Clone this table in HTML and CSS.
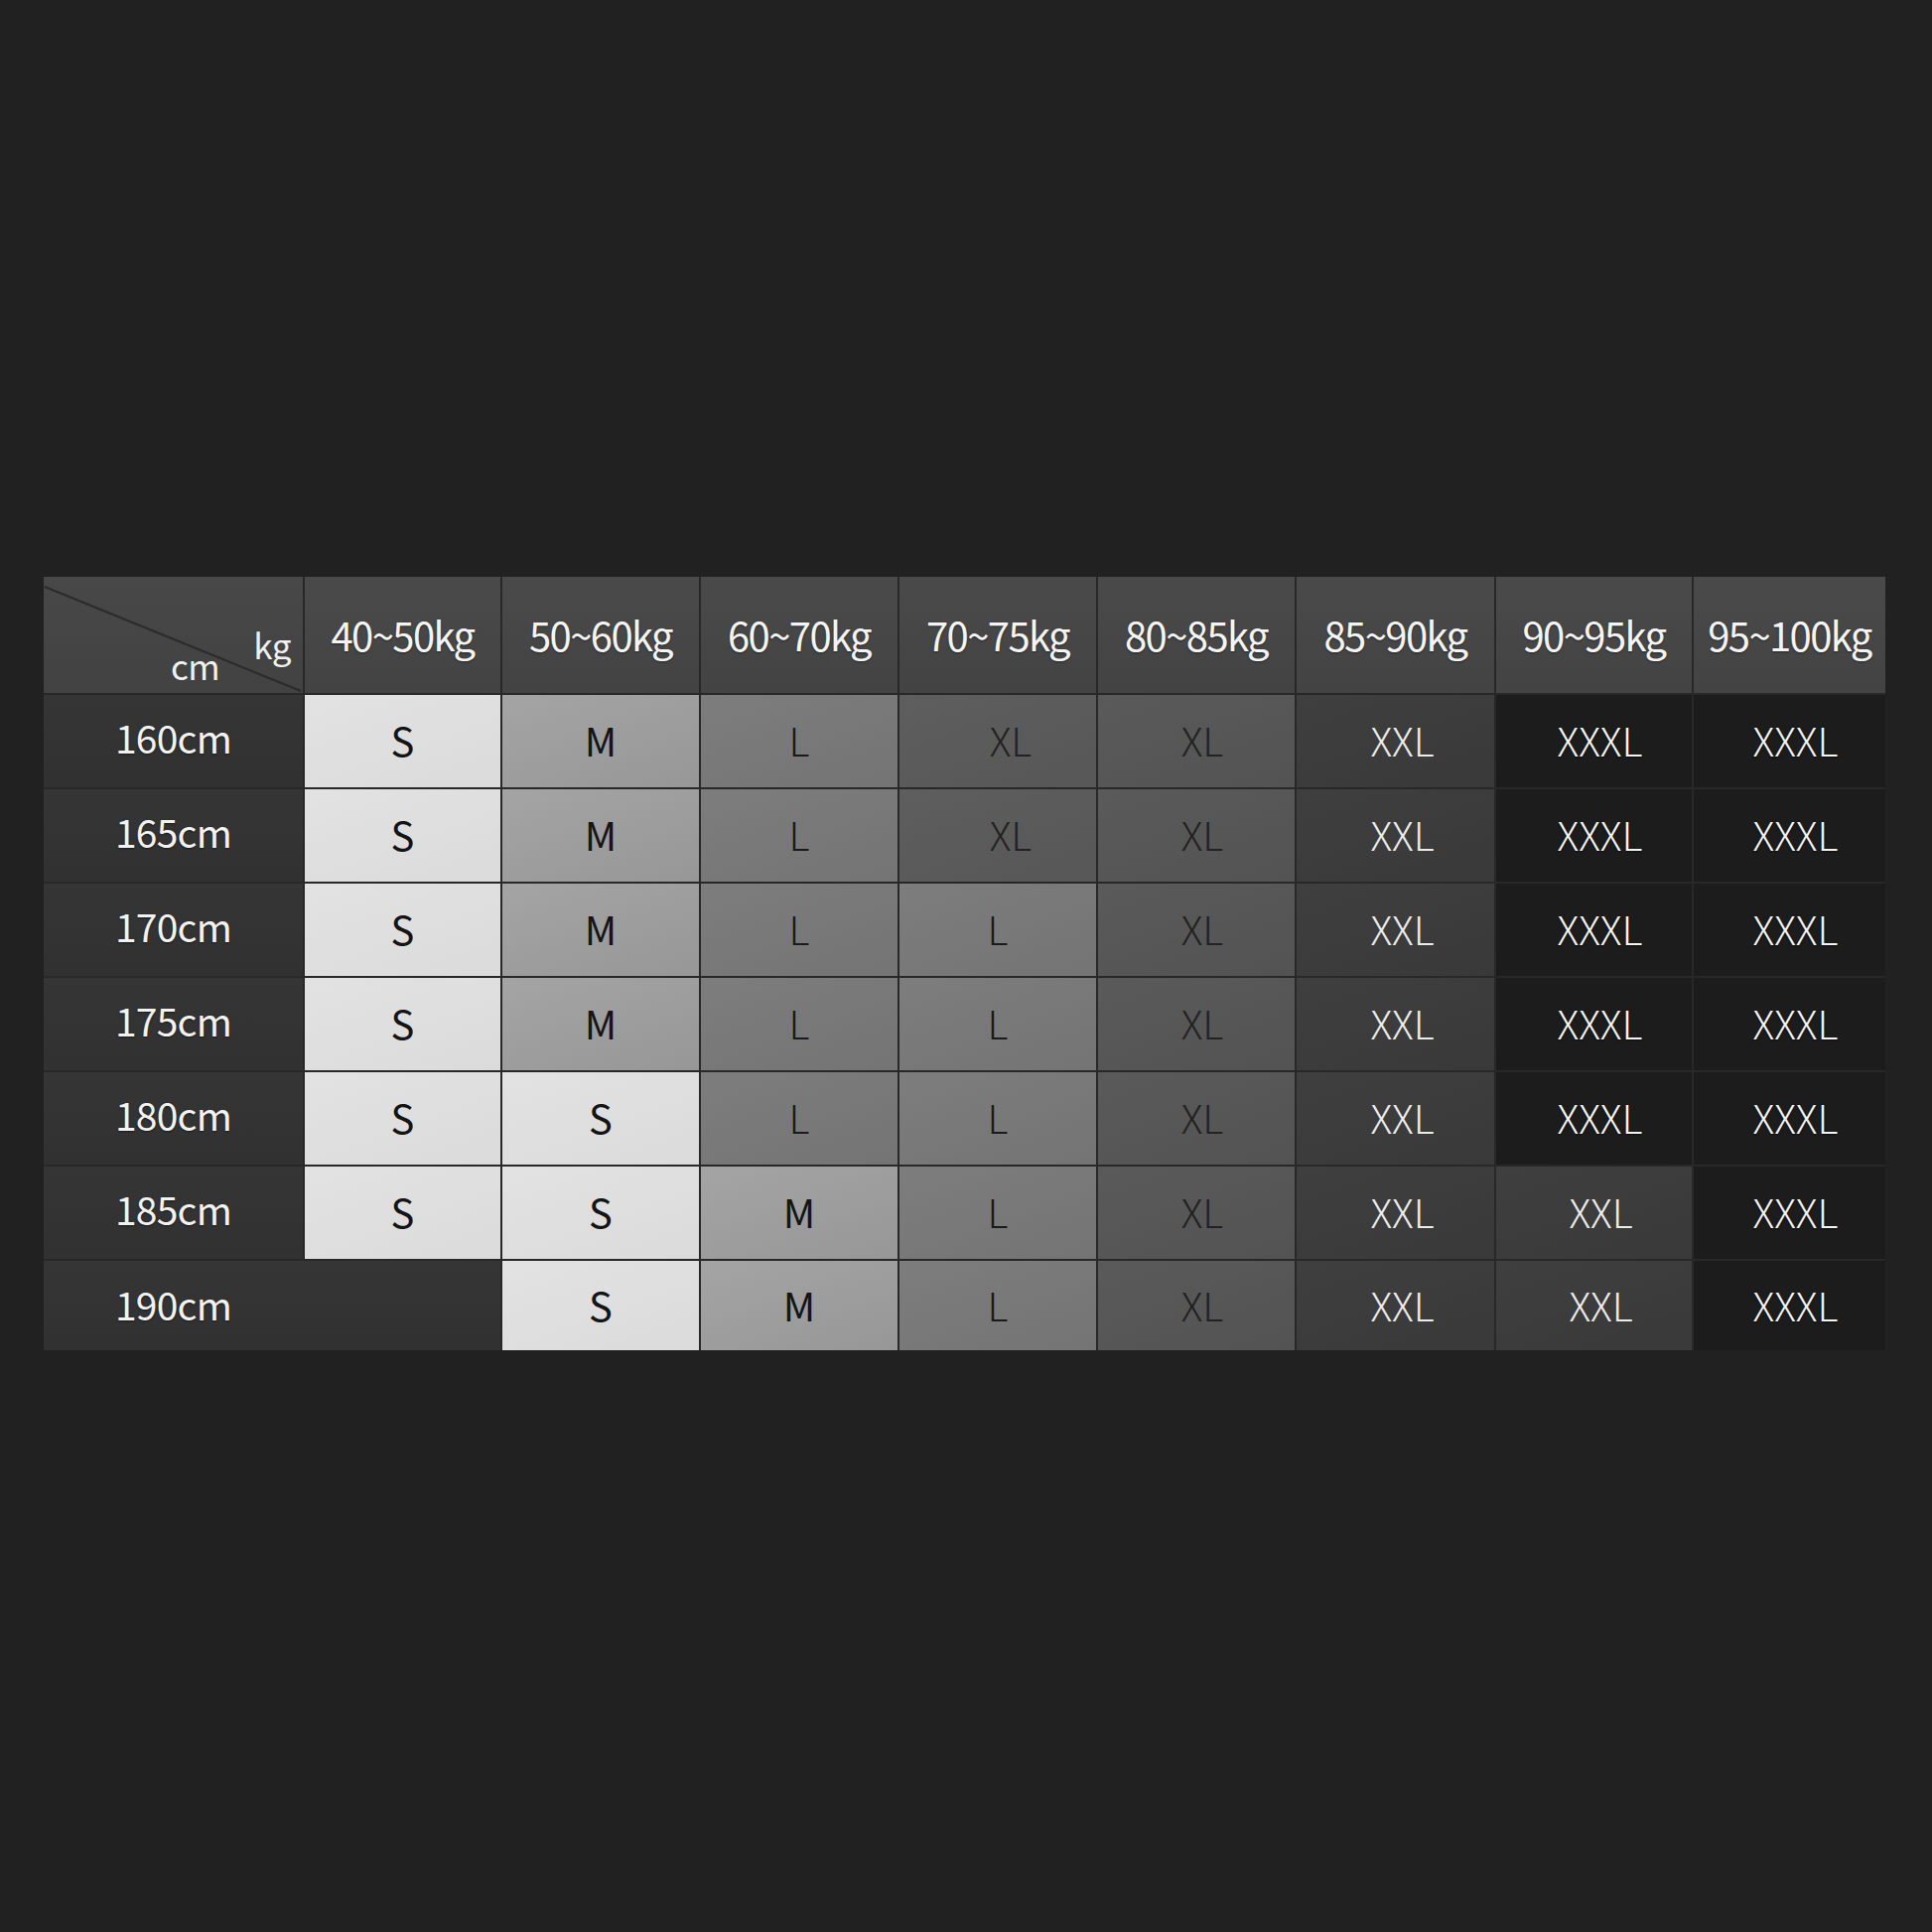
FILE: index.html
```html
<!DOCTYPE html>
<html lang="en">
<head>
<meta charset="utf-8">
<title>Size chart</title>
<link rel="stylesheet" href="styles.css">
</head>
<body>
<div class="chart">
  <div class="corner">
    <svg class="diag" viewBox="0 0 261 117" preserveAspectRatio="none"><line x1="1" y1="10" x2="259" y2="115"/></svg>
    <span class="unit-kg">kg</span>
    <span class="unit-cm">cm</span>
  </div>
  <div class="head">40~50kg</div>
  <div class="head">50~60kg</div>
  <div class="head">60~70kg</div>
  <div class="head">70~75kg</div>
  <div class="head">80~85kg</div>
  <div class="head">85~90kg</div>
  <div class="head">90~95kg</div>
  <div class="head">95~100kg</div>

  <div class="label">160cm</div>
  <div class="cell s">S</div><div class="cell m">M</div><div class="cell l">L</div><div class="cell xl xl-a">XL</div><div class="cell xl">XL</div><div class="cell xxl">XXL</div><div class="cell xxxl">XXXL</div><div class="cell xxxl">XXXL</div>

  <div class="label">165cm</div>
  <div class="cell s">S</div><div class="cell m">M</div><div class="cell l">L</div><div class="cell xl xl-a">XL</div><div class="cell xl">XL</div><div class="cell xxl">XXL</div><div class="cell xxxl">XXXL</div><div class="cell xxxl">XXXL</div>

  <div class="label">170cm</div>
  <div class="cell s">S</div><div class="cell m">M</div><div class="cell l">L</div><div class="cell l">L</div><div class="cell xl">XL</div><div class="cell xxl">XXL</div><div class="cell xxxl">XXXL</div><div class="cell xxxl">XXXL</div>

  <div class="label">175cm</div>
  <div class="cell s">S</div><div class="cell m">M</div><div class="cell l">L</div><div class="cell l">L</div><div class="cell xl">XL</div><div class="cell xxl">XXL</div><div class="cell xxxl">XXXL</div><div class="cell xxxl">XXXL</div>

  <div class="label">180cm</div>
  <div class="cell s">S</div><div class="cell s">S</div><div class="cell l">L</div><div class="cell l">L</div><div class="cell xl">XL</div><div class="cell xxl">XXL</div><div class="cell xxxl">XXXL</div><div class="cell xxxl">XXXL</div>

  <div class="label">185cm</div>
  <div class="cell s">S</div><div class="cell s">S</div><div class="cell m">M</div><div class="cell l">L</div><div class="cell xl">XL</div><div class="cell xxl">XXL</div><div class="cell xxl">XXL</div><div class="cell xxxl">XXXL</div>

  <div class="label label-wide"><span class="label-text">190cm</span></div>
  <div class="cell s">S</div><div class="cell m">M</div><div class="cell l">L</div><div class="cell xl">XL</div><div class="cell xxl">XXL</div><div class="cell xxl">XXL</div><div class="cell xxxl">XXXL</div>
</div>
</body>
</html>
```

FILE: styles.css
```css
html, body {
  margin: 0;
  padding: 0;
  background: #212121;
}

body {
  min-height: 1946px;
  display: flex;
  align-items: flex-start;
  justify-content: flex-start;
  padding: 581px 0 0 44px;
  box-sizing: border-box;
  font-family: "Noto Sans CJK SC", "Source Sans Pro", "Noto Sans", sans-serif;
}

.chart {
  display: grid;
  grid-template-columns: 261px 197px 198px 198px 198px 198px 199px 197px 193px;
  grid-template-rows: 117px repeat(6, 93px) 90px;
  gap: 2px;
  background: #282828;
}

.corner {
  position: relative;
  background: linear-gradient(180deg, #484848 0%, #424242 100%);
  display: flex;
  flex-direction: column;
  padding: 0 12px 0 0;
  box-sizing: border-box;
}

.diag {
  position: absolute;
  inset: 0;
  width: 100%;
  height: 100%;
}

.diag line {
  stroke: #2b2b2b;
  stroke-width: 2;
}

.unit-kg,
.unit-cm {
  position: relative;
  color: #f0f0f0;
  font-size: 35px;
  line-height: 1;
  letter-spacing: -0.5px;
}

.unit-kg {
  align-self: flex-end;
  margin-top: 50px;
}

.unit-cm {
  margin-left: 128px;
  margin-top: -14px;
}

.head {
  background: linear-gradient(180deg, #4a4a4a 0%, #434343 100%);
  color: #f4f4f4;
  font-size: 40px;
  letter-spacing: -1.6px;
  display: flex;
  align-items: center;
  justify-content: center;
  padding-bottom: 2px;
  box-sizing: border-box;
  text-shadow: 0 1px 2px rgba(0, 0, 0, 0.45);
}

.label {
  background: linear-gradient(180deg, #353535 0%, #313131 100%);
  color: #f2f2f2;
  font-size: 39px;
  letter-spacing: -0.8px;
  display: flex;
  align-items: center;
  justify-content: center;
  padding-bottom: 9px;
  box-sizing: border-box;
  text-shadow: 0 1px 2px rgba(0, 0, 0, 0.5);
}

.label-wide {
  grid-column: span 2;
  justify-content: flex-start;
  padding-bottom: 4px;
}

.label-text {
  width: 261px;
  text-align: center;
}

.cell {
  display: flex;
  align-items: center;
  justify-content: center;
  font-size: 40px;
  padding-bottom: 3px;
  box-sizing: border-box;
}

.s {
  background: linear-gradient(160deg, #e2e2e2 0%, #dbdbdb 100%);
  color: #141414;
}

.m {
  background: linear-gradient(160deg, #a4a4a4 0%, #979797 100%);
  color: #151515;
}

.l {
  background: linear-gradient(160deg, #7d7d7d 0%, #747474 100%);
  color: #1a1a1a;
  font-weight: 300;
}

.xl {
  background: linear-gradient(160deg, #5a5a5a 0%, #535353 100%);
  color: #222;
  font-weight: 300;
  padding-left: 12px;
}

.xl-a {
  background: linear-gradient(160deg, #5e5e5e 0%, #575757 100%);
  padding-left: 26px;
}

.xxl {
  background: linear-gradient(160deg, #3f3f3f 0%, #393939 100%);
  color: #ececec;
  font-weight: 300;
  padding-left: 14px;
}

.xxxl {
  background: #1c1c1c;
  color: #f4f4f4;
  font-weight: 300;
  padding-left: 12px;
  text-shadow: 0 1px 2px rgba(0, 0, 0, 0.6);
}
```
